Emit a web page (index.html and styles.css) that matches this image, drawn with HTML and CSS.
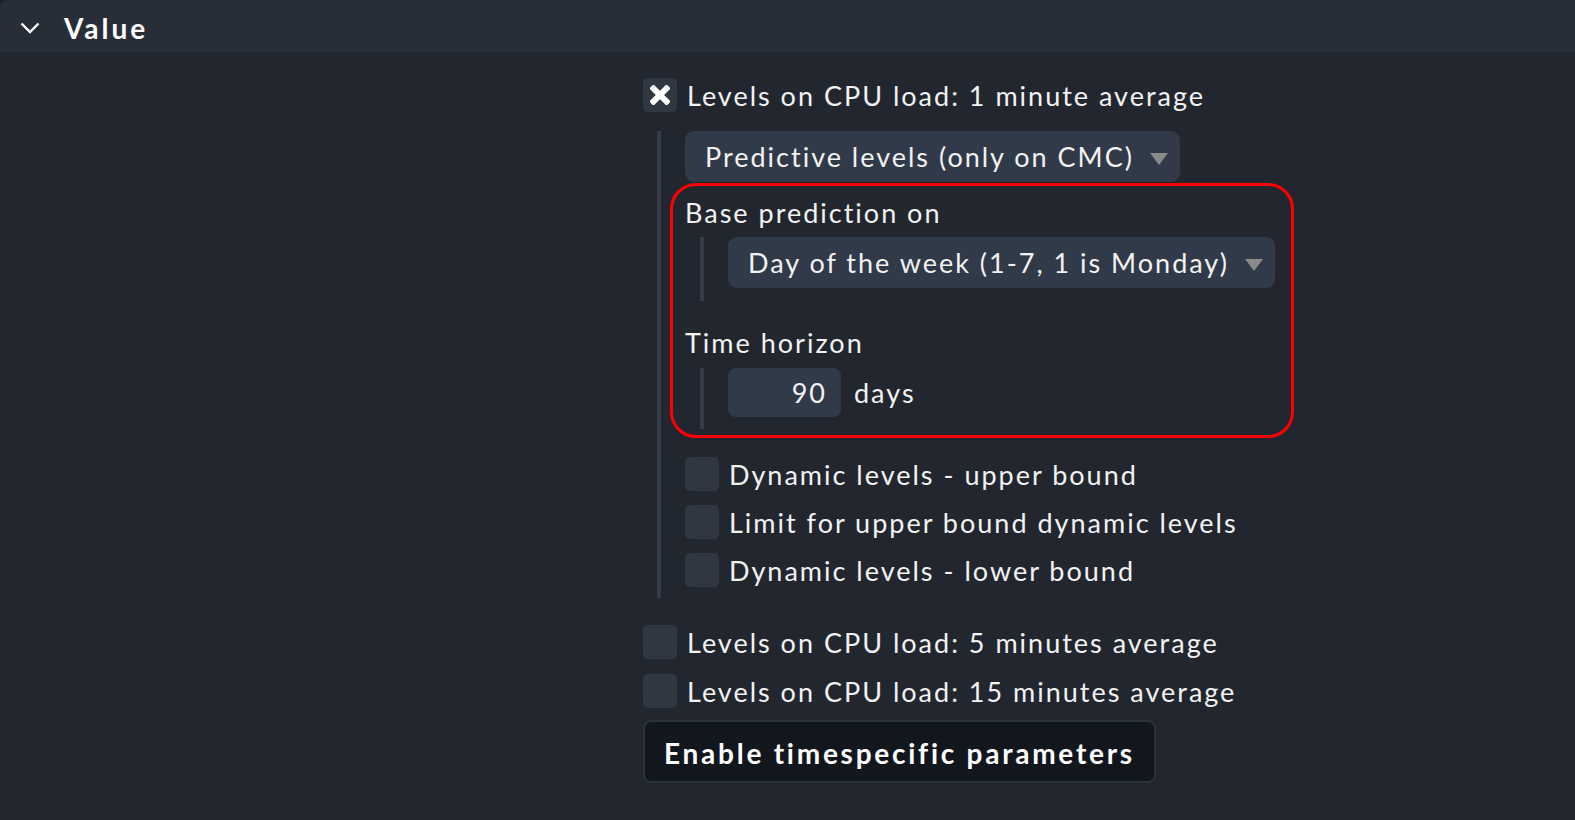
FILE: index.html
```html
<!DOCTYPE html>
<html>
<head>
<meta charset="utf-8">
<link rel="stylesheet" href="styles.css">
</head>
<body>
<div class="page">
  <div class="header">
    <svg class="chevron" width="20" height="12" viewBox="0 0 20 12"><path d="M1.5 1.5 L10 10 L18.5 1.5" fill="none" stroke="#fff" stroke-width="2.4"/></svg>
    <span class="title">Value</span>
  </div>
  <div class="form">
    <div class="check-row">
      <span class="checkbox checked"><svg width="20" height="20" viewBox="0 0 20 20"><path d="M3.5 3.5 L16.5 16.5 M16.5 3.5 L3.5 16.5" stroke="#fff" stroke-width="6" stroke-linecap="square" fill="none"/></svg></span>
      <span class="label">Levels on CPU load: 1 minute average</span>
    </div>
    <div class="nested">
      <div class="select">Predictive levels (only on CMC)<span class="arrow"></span></div>
      <div class="highlight">
        <div class="field-title">Base prediction on</div>
        <div class="indent">
          <div class="select wide">Day of the week (1-7, 1 is Monday)<span class="arrow"></span></div>
        </div>
        <div class="field-title second">Time horizon</div>
        <div class="indent second">
          <div class="input-row">
            <span class="number">90</span>
            <span class="unit">days</span>
          </div>
        </div>
      </div>
      <div class="check-list">
        <div class="check-row"><span class="checkbox"></span><span class="label">Dynamic levels - upper bound</span></div>
        <div class="check-row"><span class="checkbox"></span><span class="label">Limit for upper bound dynamic levels</span></div>
        <div class="check-row"><span class="checkbox"></span><span class="label">Dynamic levels - lower bound</span></div>
      </div>
    </div>
    <div class="check-list outer">
      <div class="check-row"><span class="checkbox"></span><span class="label">Levels on CPU load: 5 minutes average</span></div>
      <div class="check-row"><span class="checkbox"></span><span class="label">Levels on CPU load: 15 minutes average</span></div>
    </div>
    <button class="button">Enable timespecific parameters</button>
  </div>
</div>
</body>
</html>
```
FILE: styles.css
```css
html, body {
  margin: 0;
  padding: 0;
  background: #1e222a;
}
body {
  font-family: Lato, "Noto Sans", sans-serif;
  color: #f2f2f2;
  font-size: 27px;
}
.page {
  background: #22272f;
  min-height: 820px;
  border-top-left-radius: 8px;
  overflow: hidden;
}
.header {
  height: 52px;
  background: #282e38;
  display: flex;
  align-items: center;
  padding-left: 20px;
}
.chevron {
  margin-top: 4px;
}
.title {
  margin-left: 24px;
  padding-top: 3px;
  font-weight: 700;
  font-size: 28px;
  letter-spacing: 3px;
  color: #ffffff;
}
.form {
  margin-left: 643px;
  padding-top: 26px;
  display: flex;
  flex-direction: column;
  align-items: flex-start;
}
.check-row {
  display: flex;
  align-items: center;
  height: 34px;
  gap: 10px;
}
.checkbox {
  width: 34px;
  height: 34px;
  border-radius: 5px;
  background: #2f3742;
  flex: none;
  display: flex;
  align-items: center;
  justify-content: center;
}
.label {
  line-height: 34px;
  padding-top: 2px;
  white-space: nowrap;
  letter-spacing: 2px;
}
.nested {
  margin-top: 19px;
  margin-left: 14px;
  border-left: 4px solid #353d49;
  padding-left: 24px;
  padding-bottom: 11px;
  display: flex;
  flex-direction: column;
  align-items: flex-start;
}
.select {
  height: 51px;
  background: #313a48;
  border-radius: 9px;
  display: flex;
  align-items: center;
  padding: 0 12px 0 20px;
  white-space: nowrap;
  letter-spacing: 2px;
}
.arrow {
  width: 0;
  height: 0;
  border-left: 9px solid transparent;
  border-right: 9px solid transparent;
  border-top: 12px solid #8a8a8a;
  margin-left: 16px;
  margin-top: 5px;
}
.highlight {
  margin-top: 1px;
  margin-left: -15px;
  width: 624px;
  box-sizing: border-box;
  border: 3px solid #ff0000;
  border-radius: 26px;
  padding: 10px 12px 6px 12px;
}
.field-title {
  line-height: 34px;
  letter-spacing: 2px;
}
.field-title.second {
  margin-top: 25px;
}
.indent {
  margin-top: 7px;
  margin-left: 15px;
  border-left: 4px solid #353d49;
  padding-left: 24px;
  padding-bottom: 13px;
  display: flex;
}
.indent.second {
  margin-top: 8px;
  padding-bottom: 12px;
}
.input-row {
  display: flex;
  align-items: center;
  gap: 13px;
}
.number {
  width: 113px;
  height: 49px;
  box-sizing: border-box;
  background: #313a48;
  border-radius: 8px;
  text-align: right;
  padding-right: 14px;
  line-height: 49px;
  letter-spacing: 2px;
}
.unit {
  letter-spacing: 2px;
}
.check-list {
  margin-top: 19px;
  display: flex;
  flex-direction: column;
  gap: 14px;
}
.check-list.outer {
  margin-top: 27px;
  gap: 15px;
}
.button {
  margin-top: 12px;
  width: 513px;
  height: 63px;
  background: #12171e;
  border: 2px solid #2b323c;
  border-radius: 8px;
  color: #ffffff;
  font-family: Lato, "Noto Sans", sans-serif;
  font-weight: 700;
  font-size: 28px;
  letter-spacing: 2.75px;
  text-align: left;
  padding: 3px 0 0 19px;
}
```
